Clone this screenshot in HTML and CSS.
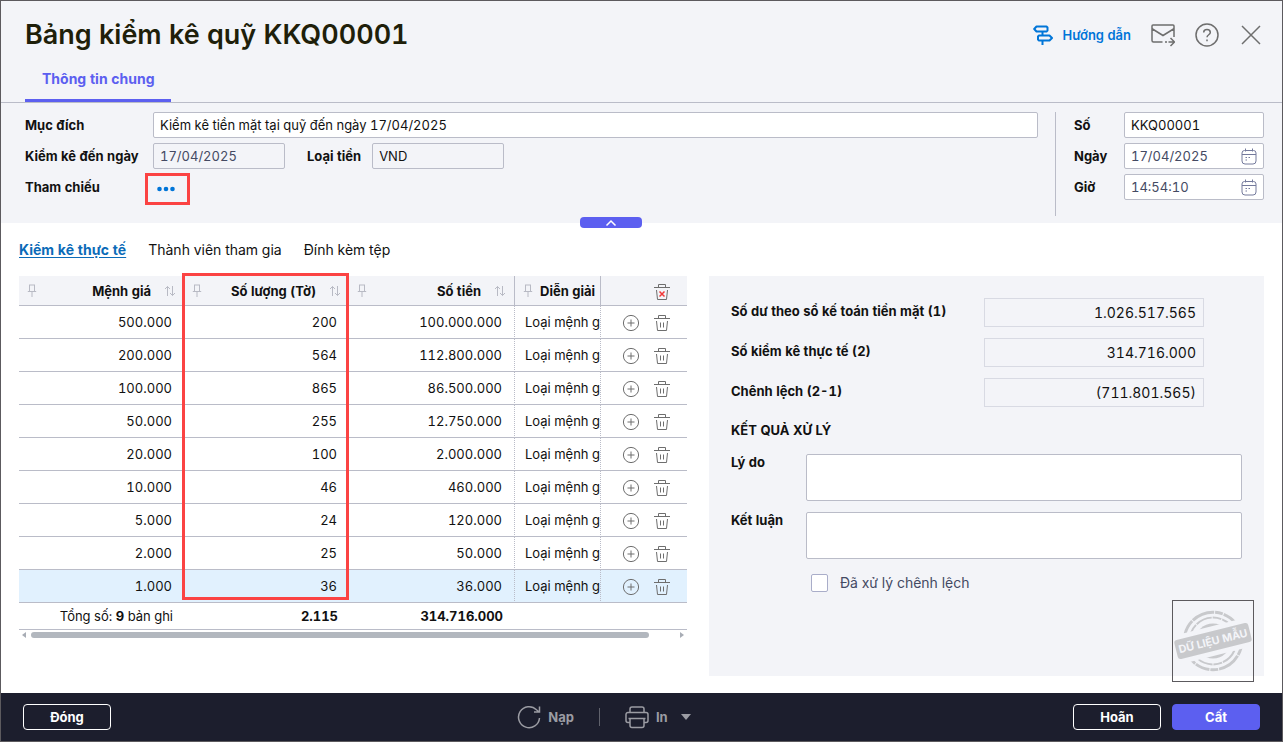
FILE: index.html
```html
<!DOCTYPE html>
<html lang="vi">
<head>
    <meta charset="UTF-8">
    <meta name="viewport" content="width=device-width, initial-scale=1.0">
    <title>Bảng kiểm kê quỹ KKQ00001</title>
    <link rel="stylesheet" href="styles.css">
</head>
<body>
    <!-- shared icons -->
    <svg class="sprite" aria-hidden="true">
        <symbol id="icon-pin" viewBox="0 0 10 13">
            <path d="M2 1h6M2.500 1v6.500M7.500 1v6.500M.8 7.500h8.400M5 8v5" />
        </symbol>
        <symbol id="icon-sort" viewBox="0 0 12 12">
            <path d="M3.5 11V1.5M1 4l2.5-2.5L6 4M8.5 1v9.5M6 8l2.5 2.5L11 8" />
        </symbol>
        <symbol id="icon-add" viewBox="0 0 18 18">
            <circle cx="9" cy="9" r="7.6" />
            <path d="M9 5.5v7M5.5 9h7" />
        </symbol>
        <symbol id="icon-trash" viewBox="0 0 18 18">
            <path d="M1 4.5h16M5.5 4.500V1.500h7v3M3.500 7l1 9.500h9L14.500 7M7.500 8.500v5M10.500 8.500v5" />
        </symbol>
        <symbol id="icon-calendar" viewBox="0 0 16 17">
            <path d="M3.500 2.500h9a2.500 2.500 0 0 1 2.500 2.500v8a3 3 0 0 1-3 3H4a3 3 0 0 1-3-3V5a2.500 2.500 0 0 1 2.500-2.500zM1 6.500h14M4.500 .5v3M11.500 .5v3M4.500 9.500h1.500M7.500 9.500h1.500M4.500 12h1.500" />
        </symbol>
    </svg>

    <div class="window">
        <header class="header">
            <div class="title-bar">
                <h1>Bảng kiểm kê quỹ KKQ00001</h1>
                <div class="tools">
                    <a href="#" class="guide">
                        <svg width="20" height="20" viewBox="0 0 20 20"><path d="M3.500 1.500h10l1 1v3l-1 1h-10L1.200 4zM6 10.500h10.500L19 13l-2.500 2.500H6l-1-1v-3zM9.500 6.500v4M9.500 15.500V20" /></svg>
                        Hướng dẫn
                    </a>
                    <button class="tool" aria-label="Gửi email">
                        <svg width="24" height="24" viewBox="0 0 24 24"><path d="M11.500 19H2.500a1.500 1.500 0 0 1-1.500-1.500V3a1 1 0 0 1 1-1h20a1 1 0 0 1 1 1v11M1.500 6L12 12.500 22.500 6M14 19h2M17.500 19H23M19.500 15l4 4-4 4" /></svg>
                    </button>
                    <button class="tool" aria-label="Trợ giúp">
                        <svg width="24" height="24" viewBox="0 0 24 24"><circle cx="12" cy="12" r="11" /><path d="M8.700 9.500C8.700 7.500 10 6.500 12 6.500s3.300 1.200 3.300 3c0 2.200-3.300 2.300-3.300 4.700M12 16.500v1.700" /></svg>
                    </button>
                    <button class="tool" aria-label="Đóng cửa sổ">
                        <svg width="24" height="24" viewBox="0 0 24 24"><path d="M3 3l18 18M21 3L3 21" /></svg>
                    </button>
                </div>
            </div>
            <nav class="main-tabs">
                <a href="#" class="main-tab">Thông tin chung</a>
            </nav>
        </header>

        <section class="info">
            <div class="info-left">
                <label for="purpose">Mục đích</label>
                <input type="text" id="purpose" class="field wide" value="Kiểm kê tiền mặt tại quỹ đến ngày 17/04/2025">
                <label for="toDate">Kiểm kê đến ngày</label>
                <div class="field-row">
                    <input type="text" id="toDate" class="field muted readonly" value="17/04/2025" readonly>
                    <label for="currency">Loại tiền</label>
                    <input type="text" id="currency" class="field readonly" value="VND" readonly>
                </div>
                <label for="refBtn">Tham chiếu</label>
                <button id="refBtn" class="ref-btn" aria-label="Chọn tham chiếu">
                    <svg width="18" height="6" viewBox="0 0 18 6"><circle cx="2.500" cy="3" r="2.300" /><circle cx="9" cy="3" r="2.300" /><circle cx="15.500" cy="3" r="2.300" /></svg>
                </button>
            </div>
            <div class="info-right">
                <label for="number">Số</label>
                <input type="text" id="number" class="field" value="KKQ00001">
                <label for="date">Ngày</label>
                <div class="field picker">
                    <input type="text" id="date" value="17/04/2025">
                    <svg class="calendar"><use href="#icon-calendar" /></svg>
                </div>
                <label for="time">Giờ</label>
                <div class="field picker">
                    <input type="text" id="time" value="14:54:10">
                    <svg class="calendar"><use href="#icon-calendar" /></svg>
                </div>
            </div>
            <button class="collapse" aria-label="Thu gọn">
                <svg width="12" height="8" viewBox="0 0 12 8"><path d="M1.500 6.500L6 2l4.500 4.500" /></svg>
            </button>
        </section>

        <main class="content">
            <nav class="sub-tabs">
                <a href="#" class="active">Kiểm kê thực tế</a>
                <a href="#">Thành viên tham gia</a>
                <a href="#">Đính kèm tệp</a>
            </nav>

            <div class="panels">
                <div class="grid">
                    <table>
                        <colgroup>
                            <col class="col-num">
                            <col class="col-num">
                            <col class="col-num">
                            <col class="col-desc">
                            <col class="col-actions">
                        </colgroup>
                        <thead>
                            <tr>
                                <th><div class="th"><svg class="pin"><use href="#icon-pin" /></svg><span>Mệnh giá</span><svg class="sort"><use href="#icon-sort" /></svg></div></th>
                                <th class="marked"><div class="th"><svg class="pin"><use href="#icon-pin" /></svg><span>Số lượng (Tờ)</span><svg class="sort"><use href="#icon-sort" /></svg></div></th>
                                <th><div class="th"><svg class="pin"><use href="#icon-pin" /></svg><span>Số tiền</span><svg class="sort"><use href="#icon-sort" /></svg></div></th>
                                <th class="desc"><div class="th"><svg class="pin"><use href="#icon-pin" /></svg><span>Diễn giải</span></div></th>
                                <th class="actions">
                                    <div class="row-actions">
                                        <button aria-label="Xóa tất cả"><svg class="icon" viewBox="0 0 18 18"><path d="M1 4.500h16M5.500 4.500V1.500h7v3M3.500 7l1 9.500h9L14.500 7" /><path class="cross" d="M6.500 8.500l5 5M11.500 8.500l-5 5" /></svg></button>
                                    </div>
                                </th>
                            </tr>
                        </thead>
                        <tbody id="rows"></tbody>
                        <tfoot>
                            <tr>
                                <td>Tổng số: <b>9</b> bản ghi</td>
                                <td><b>2.115</b></td>
                                <td><b>314.716.000</b></td>
                                <td></td>
                                <td></td>
                            </tr>
                        </tfoot>
                    </table>
                    <div class="scrollbar">
                        <svg width="4" height="6" viewBox="0 0 4 6"><path d="M4 0v6L0 3z" /></svg>
                        <div class="track"><div class="thumb"></div></div>
                        <svg width="4" height="6" viewBox="0 0 4 6"><path d="M0 0v6l4-3z" /></svg>
                    </div>
                </div>

                <div class="result">
                    <div class="sum-row">
                        <label for="book">Số dư theo sổ kế toán tiền mặt (1)</label>
                        <input type="text" id="book" value="1.026.517.565" readonly>
                    </div>
                    <div class="sum-row">
                        <label for="actual">Số kiểm kê thực tế (2)</label>
                        <input type="text" id="actual" value="314.716.000" readonly>
                    </div>
                    <div class="sum-row">
                        <label for="diff">Chênh lệch (2-1)</label>
                        <input type="text" id="diff" value="(711.801.565)" readonly>
                    </div>
                    <h2>KẾT QUẢ XỬ LÝ</h2>
                    <div class="note-row">
                        <label for="reason">Lý do</label>
                        <textarea id="reason"></textarea>
                    </div>
                    <div class="note-row">
                        <label for="conclusion">Kết luận</label>
                        <textarea id="conclusion"></textarea>
                    </div>
                    <label class="check"><input type="checkbox"> Đã xử lý chênh lệch</label>

                    <svg class="stamp" viewBox="0 0 82 82">
                        <circle cx="41" cy="41" r="29.500" stroke-width="3" stroke-dasharray="15 1 24 1 8 1" />
                        <circle cx="41" cy="41" r="24" stroke-width="2" stroke-dasharray="9 1 17 1" />
                        <circle class="fill" cx="41" cy="41" r="18" />
                        <g transform="rotate(-14 41 41)">
                            <rect class="gap" x="0" y="26" width="82" height="30" />
                            <rect class="fill" x="2" y="31" width="78" height="20" rx="3" />
                            <text x="41" y="45" text-anchor="middle">DỮ LIỆU MẪU</text>
                        </g>
                    </svg>
                </div>
            </div>
        </main>

        <footer class="footer">
            <button class="btn">Đóng</button>
            <div class="footer-tools">
                <button>
                    <svg width="24" height="24" viewBox="0 0 24 24"><path d="M22.500 13A10.500 10.500 0 1 1 19.500 4.800L22 7M22.500 1.500V7H17" /></svg>
                    Nạp
                </button>
                <span class="divider"></span>
                <button>
                    <svg width="24" height="24" viewBox="0 0 24 24"><path d="M5 7.500V4a2 2 0 0 1 2-2h10a2 2 0 0 1 2 2v3.500M5 17.500H3a2 2 0 0 1-2-2v-6a2 2 0 0 1 2-2h18a2 2 0 0 1 2 2v6a2 2 0 0 1-2 2h-2M3.500 13.500h17M5 13.500h14v7a2 2 0 0 1-2 2H7a2 2 0 0 1-2-2z" /></svg>
                    In
                    <span class="caret"></span>
                </button>
            </div>
            <div class="footer-actions">
                <button class="btn">Hoãn</button>
                <button class="btn primary">Cất</button>
            </div>
        </footer>
    </div>

    <script>
        const data = [
            ['500.000', '200', '100.000.000'],
            ['200.000', '564', '112.800.000'],
            ['100.000', '865', '86.500.000'],
            ['50.000', '255', '12.750.000'],
            ['20.000', '100', '2.000.000'],
            ['10.000', '46', '460.000'],
            ['5.000', '24', '120.000'],
            ['2.000', '25', '50.000'],
            ['1.000', '36', '36.000']
        ];

        // Build the denomination rows, the last one is selected
        document.getElementById('rows').innerHTML = data.map((row, i) => `
            <tr class="${i === data.length - 1 ? 'selected' : ''}">
                <td>${row[0]}</td>
                <td>${row[1]}</td>
                <td>${row[2]}</td>
                <td class="desc">Loại mệnh giá</td>
                <td class="actions">
                    <div class="row-actions">
                        <button aria-label="Thêm dòng"><svg class="icon"><use href="#icon-add" /></svg></button>
                        <button aria-label="Xóa dòng"><svg class="icon"><use href="#icon-trash" /></svg></button>
                    </div>
                </td>
            </tr>`).join('');
    </script>
</body>
</html>
```
FILE: styles.css
```css
* {
    box-sizing: border-box;
}
body {
    margin: 0;
    font-family: Inter, "Liberation Sans", sans-serif;
    font-size: 13px;
    line-height: 16px;
    font-feature-settings: "tnum";
    color: #111;
}
button, input, textarea {
    font: inherit;
    font-feature-settings: inherit;
    color: inherit;
}
button {
    background: none;
    border: none;
    padding: 0;
    cursor: pointer;
}
a {
    text-decoration: none;
    color: inherit;
}
svg {
    display: block;
    flex: none;
    fill: none;
}
.sprite {
    position: absolute;
    width: 0;
    height: 0;
}
.window {
    display: flex;
    flex-direction: column;
    min-height: 100vh;
    border: 1px solid #5c5a5e;
}

/* Header */
.header {
    background-color: #f3f4f8;
    border-bottom: 1px solid #babcc8;
}
.title-bar {
    display: flex;
    justify-content: space-between;
    align-items: center;
    height: 68px;
    padding: 0 19px 0 24px;
}
h1 {
    margin: 0;
    font-size: 27px;
    line-height: 32px;
    font-weight: 600;
    color: #1f1f0a;
}
.tools {
    display: flex;
    align-items: center;
    gap: 20px;
}
.guide {
    display: flex;
    align-items: center;
    gap: 10px;
    font-weight: 600;
    color: #0075d8;
}
.guide svg {
    stroke: #0075d8;
    stroke-width: 2;
    stroke-linejoin: round;
}
.tool svg {
    stroke: #6e6e6e;
    stroke-width: 1.5;
}
.main-tabs {
    display: flex;
    padding: 0 24px;
}
.main-tab {
    height: 33px;
    padding: 1px 16px 0 17px;
    border-bottom: 3px solid #5c5ff0;
    font-size: 14px;
    line-height: 17px;
    font-weight: 700;
    color: #5c5ff0;
}

/* General info */
.info {
    position: relative;
    display: flex;
    gap: 17px;
    padding: 9px 18px 7px 24px;
    background-color: #f3f4f8;
}
.info label {
    font-weight: 700;
    white-space: nowrap;
}
.info-left {
    flex: 1;
    display: grid;
    grid-template-columns: 118px 1fr;
    grid-auto-rows: 26px;
    align-items: center;
    gap: 5px 10px;
}
.info-right {
    display: grid;
    grid-template-columns: 40px 140px;
    grid-auto-rows: 26px;
    align-items: center;
    gap: 5px 10px;
    padding: 0 0 16px 18px;
    border-left: 1px solid #babcc8;
}
.field {
    width: 132px;
    height: 26px;
    padding: 0 6px;
    border: 1px solid #babcc8;
    border-radius: 2px;
    background-color: #fff;
}
.field.wide, .info-right .field {
    width: 100%;
}
.field.readonly {
    background-color: #f3f4f8;
}
.field.muted, .picker {
    color: #444a63;
}
.field-row {
    display: flex;
    align-items: center;
}
.field-row label {
    padding: 0 11px 0 22px;
}
.picker {
    display: flex;
    align-items: center;
}
.picker input {
    flex: 1;
    min-width: 0;
    padding: 0;
    border: none;
    background: none;
}
.calendar {
    width: 16px;
    height: 17px;
    stroke: #747a9c;
}
.ref-btn {
    position: relative;
    width: 26px;
    height: 26px;
    padding-top: 3px;
    display: flex;
    align-items: center;
    justify-content: center;
}
.ref-btn svg {
    fill: #0075d8;
}
.ref-btn::after {
    content: "";
    position: absolute;
    top: -1px;
    bottom: -5px;
    left: -8px;
    right: -11px;
    border: 3px solid #fb4343;
}
.collapse {
    position: absolute;
    left: 50%;
    bottom: -5px;
    width: 62px;
    height: 11px;
    margin-left: -62px;
    display: flex;
    align-items: center;
    justify-content: center;
    border-radius: 4px;
    background-color: #5c5ff0;
}
.collapse svg {
    stroke: #fff;
    stroke-width: 1.5;
}

/* Content */
.content {
    flex: 1;
    padding: 17px 18px;
    background-color: #fff;
}
.sub-tabs {
    display: flex;
    gap: 22px;
    height: 36px;
    font-size: 14px;
    line-height: 20px;
}
.sub-tabs .active {
    font-weight: 700;
    color: #0b6bb8;
    text-decoration: underline;
    text-underline-offset: 2px;
}
.panels {
    display: grid;
    grid-template-columns: 668fr 555fr;
    gap: 22px;
}
.grid {
    min-width: 0;
}
table {
    width: 100%;
    table-layout: fixed;
    border-collapse: separate;
    border-spacing: 0;
}
.col-num {
    width: 165px;
}
.col-desc {
    width: 86px;
}
th {
    height: 30px;
    padding: 0 8px;
    background-color: #f3f4f8;
    border-bottom: 1px solid #babcc8;
    font-weight: 700;
}
.th {
    display: flex;
    align-items: center;
}
.th span {
    margin-left: auto;
    white-space: nowrap;
}
th.desc {
    padding-right: 0;
    border-left: 1px solid #babcc8;
}
.desc .th span {
    margin-left: 7px;
}
.pin {
    width: 10px;
    height: 13px;
    stroke: #b8bac4;
}
.sort {
    width: 12px;
    height: 12px;
    margin-left: 13px;
    stroke: #b8bac4;
}
/* highlighted quantity column */
.marked {
    position: relative;
}
.marked::after {
    content: "";
    position: absolute;
    top: -3px;
    left: -2px;
    right: 0;
    height: 321px;
    border: 3px solid #fb4343;
}
td {
    height: 33px;
    padding: 0 12px 0 8px;
    border-bottom: 1px solid #babcc8;
    text-align: right;
}
td.desc {
    padding: 0 0 0 10px;
    border-left: 1px dotted #babcc8;
    text-align: left;
    white-space: nowrap;
    overflow: hidden;
}
th.actions {
    border-left: 1px solid #babcc8;
}
td.actions {
    border-left: 1px dotted #babcc8;
}
th.actions, td.actions {
    padding: 2px 16px 0 0;
}
.row-actions {
    display: flex;
    justify-content: flex-end;
    gap: 13px;
}
.icon {
    width: 18px;
    height: 18px;
    stroke: #6e6e6e;
}
.cross {
    stroke: #f03838;
    stroke-width: 1.5;
}
.selected td {
    background-color: #e1f1fe;
}
tfoot td {
    height: 27px;
    padding-right: 11px;
}
b {
    font-weight: 700;
}
.scrollbar {
    display: flex;
    align-items: center;
    gap: 5px;
    padding: 2px 3px;
}
.scrollbar svg {
    fill: #a8adb5;
}
.track {
    flex: 1;
}
.thumb {
    width: 96%;
    height: 6px;
    border-radius: 3px;
    background-color: #b2b7be;
}

/* Result panel */
.result {
    position: relative;
    min-height: 400px;
    padding: 22px;
    background-color: #f3f4f8;
}
.result label, h2 {
    font-weight: 700;
}
.sum-row {
    display: flex;
    justify-content: space-between;
    margin-bottom: 11px;
    padding-right: 38px;
}
.sum-row label {
    padding-top: 5px;
}
.sum-row input {
    width: 220px;
    height: 29px;
    padding: 0 7px;
    border: 1px solid #d8dae3;
    background: none;
    font-size: 14px;
    text-align: right;
}
h2 {
    margin: 15px 0 16px;
    font-size: 13px;
    line-height: 16px;
}
.note-row {
    display: flex;
    margin-bottom: 11px;
}
.note-row label {
    width: 75px;
}
textarea {
    flex: 1;
    height: 47px;
    padding: 6px;
    border: 1px solid #babcc8;
    border-radius: 2px;
    background-color: #fff;
    resize: none;
}
.result .check {
    display: flex;
    align-items: center;
    gap: 12px;
    margin: 15px 0 0 80px;
    font-size: 14px;
    font-weight: 400;
    color: #444a63;
}
.check input {
    appearance: none;
    width: 17px;
    height: 18px;
    margin: 0;
    border: 1px solid #a9adc9;
    border-radius: 2px;
    background-color: #fff;
}
.stamp {
    position: absolute;
    right: 10px;
    bottom: -6px;
    width: 82px;
    height: 82px;
    border: 1px solid #5c5a5e;
    stroke: #c8c9cc;
}
.stamp .fill {
    fill: #c8c9cc;
    stroke: none;
}
.stamp .gap {
    fill: #f3f4f8;
    stroke: none;
}
.stamp text {
    fill: #f3f4f8;
    stroke: none;
    font-size: 11px;
    font-weight: 700;
}

/* Footer */
.footer {
    display: flex;
    justify-content: space-between;
    align-items: center;
    height: 48px;
    padding: 0 22px;
    background-color: #1c1e2d;
}
.btn {
    width: 88px;
    height: 26px;
    border: 1px solid #fff;
    border-radius: 4px;
    font-weight: 700;
    color: #fff;
}
.btn.primary {
    border-color: #5c5ff0;
    background-color: #5c5ff0;
}
.footer-tools {
    display: flex;
    align-items: center;
    gap: 25px;
    padding-left: 24px;
    color: #9b9ca3;
    font-weight: 700;
}
.footer-tools button {
    display: flex;
    align-items: center;
    gap: 7px;
}
.footer-tools svg {
    stroke: #9b9ca3;
    stroke-width: 1.5;
}
.divider {
    width: 1px;
    height: 18px;
    background-color: #60626c;
}
.caret {
    margin-left: 6px;
    border: 5px solid transparent;
    border-top: 6px solid #9b9ca3;
    border-bottom: none;
}
.footer-actions {
    display: flex;
    gap: 11px;
}
```
